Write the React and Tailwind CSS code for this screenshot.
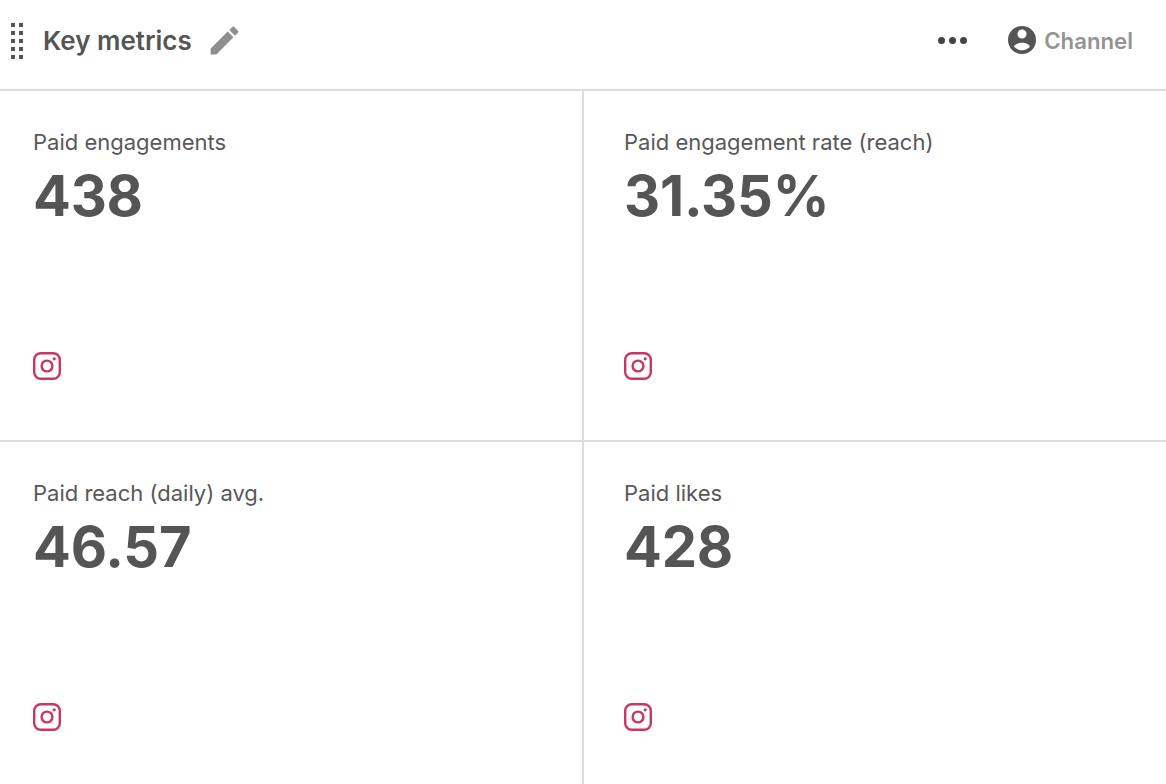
import React from 'react';

const metrics = [
  { label: 'Paid engagements', value: '438' },
  { label: 'Paid engagement rate (reach)', value: '31.35%' },
  { label: 'Paid reach (daily) avg.', value: '46.57' },
  { label: 'Paid likes', value: '428' },
];

function DragHandle() {
  return (
    <div className="grid grid-cols-2 gap-[4px] w-[12px]">
      {Array.from({ length: 10 }).map((_, i) => (
        <span key={i} className="w-[4px] h-[4px] bg-[#555555]" />
      ))}
    </div>
  );
}

function InstagramIcon() {
  return (
    <svg width="28" height="28" viewBox="0 0 28 28" fill="none" stroke="#c9365f" strokeWidth="2.4">
      <rect x="1.2" y="1.2" width="25.6" height="25.6" rx="6.5" />
      <circle cx="14" cy="14" r="5.4" />
      <circle cx="21.2" cy="6.8" r="1.6" fill="#c9365f" stroke="none" />
    </svg>
  );
}

function MetricCard({ label, value, className }) {
  return (
    <div className={`flex flex-col items-start justify-between pt-[39px] pb-[60px] border-[#dddddd] ${className}`}>
      <div>
        <p className="text-[22px] leading-[24px] text-[#585858]">{label}</p>
        <p className="mt-[12px] text-[56px] leading-[60px] font-bold tracking-[-0.2px] text-[#555555]">{value}</p>
      </div>
      <InstagramIcon />
    </div>
  );
}

export default function App() {
  return (
    <div className="h-[784px] bg-white font-['Inter',sans-serif] overflow-hidden">
      <header className="h-[91px] flex items-center justify-between border-b-2 border-[#dddddd] pb-[8px] pl-[11px] pr-[33px]">
        <div className="flex items-center">
          <DragHandle />
          <h1 className="ml-[20px] text-[26px] font-semibold text-[#555555]">Key metrics</h1>
          <svg className="ml-[14px]" width="37" height="37" viewBox="0 0 24 24" fill="#8f8f8f">
            <path d="M3 17.25V21h3.75L17.81 9.94l-3.75-3.75L3 17.25zM20.71 7.04a1 1 0 0 0 0-1.41l-2.34-2.34a1 1 0 0 0-1.41 0l-1.83 1.83 3.75 3.75 1.83-1.83z" />
          </svg>
        </div>
        <div className="flex items-center">
          <div className="flex gap-[4px]">
            <span className="w-[7px] h-[7px] rounded-full bg-[#444444]" />
            <span className="w-[7px] h-[7px] rounded-full bg-[#444444]" />
            <span className="w-[7px] h-[7px] rounded-full bg-[#444444]" />
          </div>
          <svg className="ml-[41px]" width="28" height="28" viewBox="0 0 24 24" fill="#555555">
            <path
              fillRule="evenodd"
              d="M12 0a12 12 0 1 0 0 24 12 12 0 0 0 0-24zm0 3a3.9 3.9 0 1 1 0 7.8A3.9 3.9 0 0 1 12 3zm0 11.4c-3 0-6 1.2-6.9 3.2 1.6 2 4.1 3.2 6.9 3.2s5.3-1.2 6.9-3.2c-.9-2-3.9-3.2-6.9-3.2z"
            />
          </svg>
          <span className="ml-[8px] text-[22.2px] font-semibold text-[#949494]">Channel</span>
        </div>
      </header>
      <main className="grid grid-cols-[584px_582px] grid-rows-[351px_349px]">
        {metrics.map((m, i) => (
          <MetricCard
            key={m.label}
            label={m.label}
            value={m.value}
            className={`${i % 2 === 0 ? 'border-r-2 pl-[33px]' : 'pl-[40px]'} ${i < 2 ? 'border-b-2' : ''}`}
          />
        ))}
      </main>
    </div>
  );
}
